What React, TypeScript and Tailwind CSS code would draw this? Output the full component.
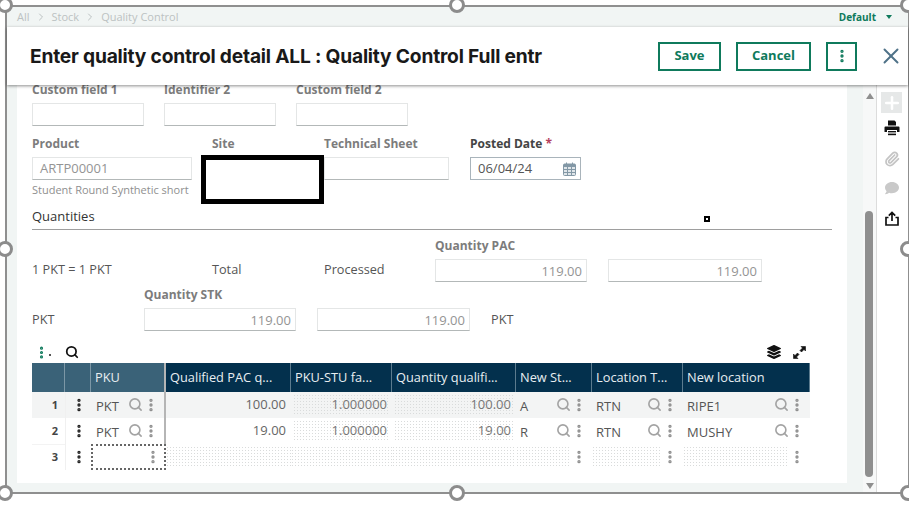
import { Search, EllipsisVertical, X, ChevronRight, Paperclip, Plus } from "lucide-react";
import { FaComment, FaLayerGroup } from "react-icons/fa";
import { Fragment } from "react";

const columns = "grid-cols-[33px_26px_75px_125px_101px_124px_76px_91px_127px]";
const dots = "bg-[radial-gradient(#d9dbdb_0.8px,transparent_0.8px)] bg-[length:3px_3px]";

function Field({ label, value, className, right }: { label?: string; value?: string; className: string; right?: boolean }) {
  return (
    <div className={`flex flex-col ${className}`}>
      {label && <div className="text-[12px] leading-[14px] font-bold text-[#7c7c7c] mb-[6px] whitespace-nowrap">{label}</div>}
      <div className={`h-[23px] border border-[#e4e6e6] border-b-[#b3b8b8] flex items-center text-[13px] text-[#949494] ${right ? "justify-end pr-[4px]" : "px-[7px]"}`}>
        {value}
      </div>
    </div>
  );
}

function Dots({ color = "text-[#8f8f8f]" }: { color?: string }) {
  return <EllipsisVertical size={16} strokeWidth={3} className={`${color} shrink-0`} />;
}

function LookupCell({ text, bg }: { text: string; bg: string }) {
  return (
    <div className={`${bg} flex items-center pl-[4px] pr-[5px] text-[13px] text-[#555] h-full`}>
      <span className="flex-1 pt-[3px]">{text}</span>
      <Search size={15} strokeWidth={2.6} className="text-[#a3a3a3] -mt-[1px]" />
      <Dots />
    </div>
  );
}

function EmptyCell() {
  return (
    <div className="bg-white flex items-center h-full pr-[5px]">
      <div className={`flex-1 h-[22px] ${dots}`} />
      <Dots />
    </div>
  );
}

function Row({ n, bg, pku, qty, st, lt, loc }: { n: number; bg: string; pku: string; qty: string; st: string; lt: string; loc: string }) {
  return (
    <Fragment>
      <div className={`${bg} flex items-center justify-end pr-[7px] text-[11px] font-bold text-[#444] h-full`}>{n}</div>
      <div className={`${bg} flex items-center justify-center border-l border-[#f0f0f0] h-full`}>
        <Dots color="text-[#222]" />
      </div>
      <div className={`${bg} pl-[1px] border-r-[2px] border-[#b5b5b5] h-full`}>
        <LookupCell text={pku} bg={bg} />
      </div>
      <div className={`${bg} flex items-center justify-end pr-[5px] text-[13px] text-[#666] h-full`}>{qty}</div>
      <div className={`${bg} h-full p-[2px]`}>
        <div className={`${dots} h-full flex items-center justify-end pr-[3px] text-[13px] text-[#777]`}>1.000000</div>
      </div>
      <div className={`${bg} h-full p-[2px]`}>
        <div className={`${dots} h-full flex items-center justify-end pr-[3px] text-[13px] text-[#777]`}>{qty}</div>
      </div>
      <LookupCell text={st} bg={bg} />
      <LookupCell text={lt} bg={bg} />
      <LookupCell text={loc} bg={bg} />
    </Fragment>
  );
}

function Handle({ className }: { className: string }) {
  return <div className={`absolute w-[16px] h-[16px] rounded-full border-[3px] border-[#8c8c8c] bg-white ${className}`} />;
}

export default function App() {
  return (
    <div className="relative w-[909px] h-[507px] overflow-hidden bg-white font-['Open_Sans',sans-serif] pl-[5px] pt-[5px]">
      <div className="w-[904px] h-[489px] border-t-2 border-l-2 border-b-2 border-r border-[#8f8f8f] flex flex-col">
        {/* breadcrumb */}
        <div className="h-[20px] bg-[#f1f5f4] flex items-center pl-[10px] pr-[16px] text-[11px] text-[#bcc2c2] shrink-0">
          <span>All</span>
          <ChevronRight size={12} className="mx-[5px]" />
          <span>Stock</span>
          <ChevronRight size={12} className="mx-[5px]" />
          <span>Quality Control</span>
          <span className="ml-auto text-[10px] font-bold text-[#0f7a5c]">Default</span>
          <span className="ml-[10px] w-0 h-0 border-x-[3px] border-x-transparent border-t-[4px] border-t-[#0f7a5c]" />
        </div>
        {/* header */}
        <div className="h-[58px] bg-white shrink-0 flex items-center pl-[23px] shadow-[0_1px_3px_rgba(0,0,0,0.45)] z-10">
          <h1 className="font-['Inter',sans-serif] font-bold text-[19.2px] tracking-[-0.2px] text-[#191919] flex-1">
            Enter quality control detail ALL : Quality Control Full entr
          </h1>
          <button className="w-[63px] h-[29px] border-2 border-[#0f7a5c] text-[#0f7a5c] text-[13px] font-bold">Save</button>
          <button className="w-[75px] h-[29px] ml-[15px] border-2 border-[#0f7a5c] text-[#0f7a5c] text-[13px] font-bold">Cancel</button>
          <button className="w-[31px] h-[29px] ml-[15px] border-2 border-[#0f7a5c] text-[#0f7a5c] flex items-center justify-center">
            <EllipsisVertical size={16} strokeWidth={3} />
          </button>
          <X size={26} strokeWidth={1.8} className="text-[#4f7288] ml-[21px] mr-[4px]" />
        </div>
        {/* body */}
        <div className="flex-1 flex min-h-0">
          <div className="flex-1 bg-[#f1f5f4] pl-[10px] pr-[15px] pb-[9px] flex">
            <div className="w-[830px] bg-white pl-[15px]">
              <div className="flex -mt-[2px]">
                <Field label="Custom field 1" className="w-[112px]" />
                <Field label="Identifier 2" className="w-[112px] ml-[20px]" />
                <Field label="Custom field 2" className="w-[112px] ml-[20px]" />
              </div>
              <div className="flex mt-[11px]">
                <div className="w-[160px]">
                  <Field label="Product" value="ARTP00001" className="w-[160px]" />
                  <div className="text-[11px] leading-[15px] text-[#8f8f8f] mt-[2px] whitespace-nowrap">Student Round Synthetic short</div>
                </div>
                <div className="w-[112px] ml-[20px] text-[12px] leading-[14px] font-bold text-[#7c7c7c]">Site</div>
                <Field label="Technical Sheet" className="w-[125px]" />
                <div className="ml-[21px] w-[111px]">
                  <div className="text-[12px] leading-[14px] font-bold text-[#444] mb-[6px]">
                    Posted Date <span className="text-[#b5405c]">*</span>
                  </div>
                  <div className="h-[23px] border border-[#a9b4bb] px-[7px] flex items-center justify-between text-[13px] text-[#555]">
                    06/04/24
                    <svg width="13" height="14" viewBox="0 0 13 14" className="text-[#8398a6] -mr-[3px]">
                      <rect x="0.5" y="2" width="12" height="11.5" rx="1" fill="#dfe5e9" stroke="currentColor" />
                      <rect x="1" y="2" width="11" height="3" fill="currentColor" />
                      <path d="M3.5 0.5v3M9.5 0.5v3M1 7.5h11M1 10.5h11M4.5 5v8M8.5 5v8" stroke="currentColor" />
                    </svg>
                  </div>
                </div>
              </div>
              <div className="mt-[10px] h-[23px] border-b border-[#9e9e9e] w-[800px] text-[13px] leading-[18px] font-medium text-[#333]">
                Quantities
              </div>
              {/* quantities */}
              <div className="flex mt-[9px] w-[800px] text-[12.7px] leading-[18px] text-[#555] h-[43px]">
                <div className="w-[180px] pt-[21px]">1 PKT = 1 PKT</div>
                <div className="w-[112px] pt-[21px]">Total</div>
                <div className="w-[111px] pt-[21px]">Processed</div>
                <Field label="Quantity PAC" value="119.00" right className="w-[152px]" />
                <Field value="119.00" right className="w-[154px] ml-[21px] pt-[20px]" />
              </div>
              <div className="flex mt-[6px] w-[800px] text-[12.7px] leading-[18px] text-[#555] h-[43px]">
                <div className="w-[112px] pt-[22px]">PKT</div>
                <Field label="Quantity STK" value="119.00" right className="w-[152px]" />
                <Field value="119.00" right className="w-[153px] ml-[21px] pt-[20px]" />
                <div className="ml-[21px] pt-[22px]">PKT</div>
              </div>
              {/* grid toolbar */}
              <div className="flex items-center w-[778px] h-[18px] mt-[12px]">
                <EllipsisVertical size={15} strokeWidth={3} className="text-[#0f7a5c] ml-[2px]" />
                <span className="w-[2px] h-[2px] bg-[#555] self-end mb-[5px] mr-[12px]" />
                <Search size={14} strokeWidth={3} className="text-[#111] ml-[2px]" />
                <FaLayerGroup size={14} className="text-[#111] ml-auto mr-[11px]" />
                <svg width="15" height="15" viewBox="0 0 15 15" className="text-[#111] mr-[3px]" fill="currentColor" stroke="currentColor">
                  <path d="M9 1.5h4.5V6L12 4.5 9.5 7 8 5.5 10.5 3z" strokeWidth="0.6" />
                  <path d="M1.5 9v4.5H6L4.5 12 7 9.5 5.5 8 3 10.5z" strokeWidth="0.6" />
                </svg>
              </div>
              {/* grid */}
              <div className={`grid ${columns} grid-rows-[29px_26px_26px_26px] w-[778px] mt-[2px]`}>
                <div className="bg-[#3a6278] border-r border-[#7c97a6]" />
                <div className="bg-[#3a6278] border-r border-[#7c97a6]" />
                <div className="bg-[#3a6278] border-r-[2px] border-[#b5b5b5] flex items-center px-[4px] text-[12.8px] text-[#e8eef1]">PKU</div>
                {["Qualified PAC q...", "PKU-STU fa...", "Quantity qualifi...", "New St...", "Location T...", "New location"].map((h) => (
                  <div key={h} className="bg-[#03304d] border-r border-[#5c7b8e] last:border-r-0 flex items-center px-[4px] text-[12.8px] text-[#e8eef1] whitespace-nowrap overflow-hidden">
                    {h}
                  </div>
                ))}
                <Row n={1} bg="bg-[#f3f4f4]" pku="PKT" qty="100.00" st="A" lt="RTN" loc="RIPE1" />
                <Row n={2} bg="bg-white" pku="PKT" qty="19.00" st="R" lt="RTN" loc="MUSHY" />
                <div className="flex items-center justify-end pr-[7px] text-[11px] font-bold text-[#444] border-t border-[#f3f3f3]">3</div>
                <div className="flex items-center justify-center border-l border-[#f0f0f0]">
                  <Dots color="text-[#222]" />
                </div>
                <div className="border-2 border-dotted border-[#666] flex items-center justify-end pr-[3px]">
                  <Dots />
                </div>
                <div className={`${dots} my-[2px]`} />
                <div className={`${dots} my-[2px]`} />
                <div className={`${dots} my-[2px]`} />
                <EmptyCell />
                <EmptyCell />
                <EmptyCell />
              </div>
            </div>
          </div>
          {/* scrollbar */}
          <div className="w-[13px] bg-[#f7f8f8] flex flex-col items-center pt-[8px] pb-[3px] shrink-0">
            <span className="w-0 h-0 border-x-[4px] border-x-transparent border-b-[6px] border-b-[#8f8f8f]" />
            <div className="w-[8px] h-[266px] rounded-full bg-[#8f8f8f] mt-[112px] -ml-[1px]" />
            <span className="mt-auto w-0 h-0 border-x-[4px] border-x-transparent border-t-[6px] border-t-[#8f8f8f]" />
          </div>
          {/* right rail */}
          <div className="w-[32px] bg-white border-l border-[#dcdcdc] flex flex-col items-center pt-[7px] pr-[2px] shrink-0">
            <div className="w-[21px] h-[21px] bg-[#e6e8e8] flex items-center justify-center text-white">
              <Plus size={20} strokeWidth={3} />
            </div>
            <svg width="16" height="16" viewBox="0 0 16 16" className="text-[#111] mt-[7px]" fill="currentColor">
              <path d="M4 0.5h6.5L12 2v3.5H4z" />
              <path d="M1.5 6.5h13a1 1 0 0 1 1 1V12h-2.5v-2H3v2H0.5V7.5a1 1 0 0 1 1-1z" />
              <rect x="4" y="11" width="8" height="1.4" />
              <rect x="4" y="13.6" width="8" height="1.6" />
            </svg>
            <Paperclip size={16} strokeWidth={2.6} className="text-[#c4c4c4] mt-[15px]" />
            <FaComment size={14} className="text-[#c9c9c9] mt-[14px]" />
            <svg width="14" height="15" viewBox="0 0 14 15" className="text-[#111] mt-[16px]" fill="none" stroke="currentColor" strokeWidth="1.7">
              <path d="M7 10V1.5M3.8 4.6 7 1.4l3.2 3.2M3.5 6.5H1v7.5h12V6.5h-2.5" />
            </svg>
          </div>
        </div>
      </div>
      {/* overlay: redaction box and selection handles from the screen capture */}
      <div className="absolute left-[201px] top-[155px] w-[123px] h-[49px] border-[5px] border-black bg-white" />
      <div className="absolute left-[704px] top-[216px] w-[6px] h-[6px] border-2 border-black bg-white" />
      <Handle className="-left-[3px] -top-[3px]" />
      <Handle className="left-[449px] -top-[3px]" />
      <Handle className="left-[900px] -top-[3px]" />
      <Handle className="-left-[3px] top-[241px]" />
      <Handle className="left-[900px] top-[241px]" />
      <Handle className="-left-[3px] top-[485px]" />
      <Handle className="left-[449px] top-[485px]" />
      <Handle className="left-[900px] top-[485px]" />
    </div>
  );
}
